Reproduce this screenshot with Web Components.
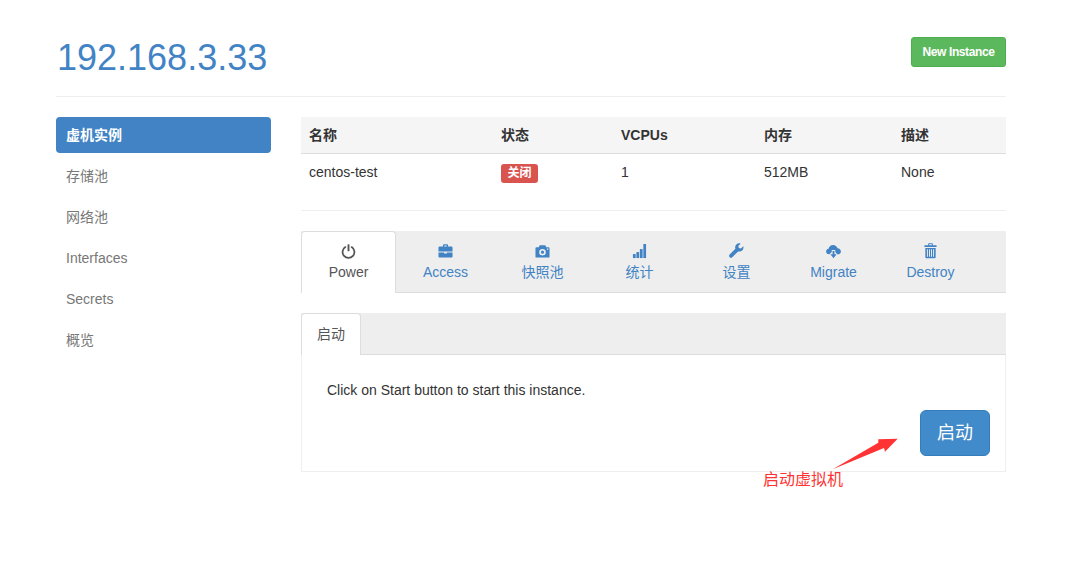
<!DOCTYPE html>
<html lang="zh">
<head>
<meta charset="utf-8">
<title>192.168.3.33</title>
<style>
    html, body { margin: 0; padding: 0; background: #fff; }
    body { font: 14px/20px "Liberation Sans", "Noto Sans CJK SC", sans-serif; color: #333; }
</style>
</head>
<body>
<instance-page>
    <page-header slot="header" title="192.168.3.33">New Instance</page-header>
    <side-nav slot="nav">
        <nav-pill active>虚机实例</nav-pill>
        <nav-pill>存储池</nav-pill>
        <nav-pill>网络池</nav-pill>
        <nav-pill>Interfaces</nav-pill>
        <nav-pill>Secrets</nav-pill>
        <nav-pill>概览</nav-pill>
    </side-nav>
    <instance-table></instance-table>
    <icon-tabs>
        <icon-tab icon="power" active>Power</icon-tab>
        <icon-tab icon="briefcase">Access</icon-tab>
        <icon-tab icon="camera">快照池</icon-tab>
        <icon-tab icon="signal">统计</icon-tab>
        <icon-tab icon="wrench">设置</icon-tab>
        <icon-tab icon="cloud">Migrate</icon-tab>
        <icon-tab icon="trash">Destroy</icon-tab>
    </icon-tabs>
    <start-panel tab="启动" button="启动" note="启动虚拟机">Click on Start button to start this instance.</start-panel>
</instance-page>

<script>
const ICONS = {
    power: '<path d="M4.600 3.300a6.300 6.300 0 1 0 6.800 0" fill="none" stroke="currentColor" stroke-width="1.900" stroke-linecap="round"/><rect x="7" y=".2" width="2" height="7.600" rx=".6" fill="currentColor"/>',
    briefcase: '<path fill-rule="evenodd" fill="currentColor" d="M5.300 2.700V1.200c0-.6.400-1 1-1h3.400c.6 0 1 .4 1 1v1.500h3.500c.7 0 1.300.5 1.300 1.200v4H.5v-4c0-.7.600-1.200 1.300-1.200zM6.700 2.700h2.600V1.500H6.700z"/><path fill="currentColor" d="M.5 9h6v1h3V9h6v4.200c0 .7-.6 1.300-1.300 1.300H1.800c-.7 0-1.300-.6-1.300-1.300z"/>',
    camera: '<path fill-rule="evenodd" fill="currentColor" d="M1.500 3.500h2.500l1-2.200h6l1 2.200h2.500c.6 0 1 .4 1 1v9c0 .6-.4 1-1 1h-13c-.6 0-1-.4-1-1v-9c0-.6.400-1 1-1zM8 5.200a3.500 3.500 0 1 0 0 7a3.500 3.500 0 0 0 0-7zM8 7a1.700 1.700 0 1 1 0 3.400a1.700 1.700 0 0 1 0-3.400zM12.700 4.700v1.300h1.500V4.700z"/>',
    signal: '<g fill="currentColor"><rect x="1" y="10.700" width="2.900" height="4.300"/><rect x="4.700" y="8.600" width="2.900" height="6.400"/><rect x="8.400" y="5.400" width="2.900" height="9.600"/><rect x="12.100" y="0" width="2.900" height="15"/></g>',
    wrench: '<path fill="currentColor" transform="translate(0,-.8)" d="M15.300 3.200l-2.600 2.500-2.200-.6-.6-2.200L12.400.4C10.800-.2 9 .2 7.800 1.400 6.600 2.600 6.300 4.300 6.800 5.800L.7 12c-.8.800-.8 2 0 2.800s2 .8 2.800 0l6.200-6.100c1.500.5 3.200.2 4.400-1 1.200-1.200 1.600-3 1.200-4.500z"/>',
    cloud: '<path fill="currentColor" d="M3.500 11H3.100C1.400 11 .1 9.700.1 8c0-1.500 1.100-2.700 2.600-3C3.200 2.700 5.200 1 7.600 1c2.200 0 4.100 1.400 4.700 3.400 2 .1 3.600 1.700 3.600 3.500 0 1.700-1.400 3.100-3.200 3.100h-.7L9.900 8.500V6.500H6.100v2z"/><path fill="currentColor" d="M7 7.500h2V11h2.300L8 15.300 4.700 11H7z"/>',
    trash: '<path transform="translate(0,-.8)" fill-rule="evenodd" fill="currentColor" d="M5.500 2V.9c0-.5.300-.9.800-.9h3.400c.5 0 .8.400.8.900V2h3.500c.3 0 .5.200.5.500V4H1.500V2.500c0-.3.200-.5.500-.5zM6.500 2h3V1h-3zM2.500 5h11v10c0 .6-.4 1-1 1h-9c-.6 0-1-.4-1-1zM4.200 6.500V14.500h1V6.500zM6.400 6.500V14.500h1V6.500zM8.600 6.500V14.500h1V6.500zM10.800 6.500V14.500h1V6.500z"/>'
};

class InstancePage extends HTMLElement {
    connectedCallback() {
        this.attachShadow({ mode: 'open' });
        this.shadowRoot.innerHTML = `
            <style>
                :host { display: block; width: 950px; min-height: 567px; padding: 0 76px 0 56px; }
                .body { display: grid; grid-template-columns: 215px 705px; column-gap: 30px; padding-top: 20px; }
            </style>
            <slot name="header"></slot>
            <div class="body">
                <slot name="nav"></slot>
                <div><slot></slot></div>
            </div>
        `;
    }
}

class PageHeader extends HTMLElement {
    connectedCallback() {
        this.attachShadow({ mode: 'open' });
        this.shadowRoot.innerHTML = `
            <style>
                :host { display: flex; justify-content: space-between; align-items: flex-start; height: 96px; border-bottom: 1px solid #eee; }
                h1 { margin: 38px 0 0 1px; font-size: 36px; line-height: 40px; font-weight: 400; color: #4183c4; }
                button {
                    margin-top: 37px; width: 95px; height: 30px; padding: 0; border: 1px solid #4cae4c; border-radius: 3px;
                    background: #5cb85c; color: #fff; font: 700 12px/18px "Liberation Sans", sans-serif; letter-spacing: -.4px;
                }
            </style>
            <h1>${this.getAttribute('title')}</h1>
            <button><slot></slot></button>
        `;
    }
}

class SideNav extends HTMLElement {
    connectedCallback() {
        this.attachShadow({ mode: 'open' });
        this.shadowRoot.innerHTML = `
            <style>:host { display: flex; flex-direction: column; gap: 5px; }</style>
            <slot></slot>
        `;
    }
}

class NavPill extends HTMLElement {
    connectedCallback() {
        this.attachShadow({ mode: 'open' });
        this.shadowRoot.innerHTML = `
            <style>
                :host { display: block; height: 36px; padding: 8px 10px; box-sizing: border-box; border-radius: 4px; color: #777; }
                :host([active]) { background: #4183c4; color: #fff; font-weight: 700; }
            </style>
            <slot></slot>
        `;
    }
}

class InstanceTable extends HTMLElement {
    connectedCallback() {
        this.attachShadow({ mode: 'open' });
        this.shadowRoot.innerHTML = `
            <style>
                :host { display: block; height: 93px; border-bottom: 1px solid #eee; }
                .row { display: grid; grid-template-columns: 192px 120px 143px 137px 113px; }
                .row > div { padding: 0 8px; }
                .head { height: 36px; line-height: 36px; background: #f5f5f5; border-bottom: 1px solid #ddd; font-weight: 700; }
                .cells { padding-top: 8px; line-height: 20px; }
                .label {
                    display: inline-block; width: 37px; height: 19px; margin-top: 2px; border-radius: 3px; background: #d9534f;
                    color: #fff; font-size: 12px; font-weight: 700; line-height: 18px; text-align: center; vertical-align: top;
                }
            </style>
            <div class="row head">
                <div>名称</div><div>状态</div><div>VCPUs</div><div>内存</div><div>描述</div>
            </div>
            <div class="row cells">
                <div>centos-test</div>
                <div><span class="label">关闭</span></div>
                <div>1</div><div>512MB</div><div>None</div>
            </div>
        `;
    }
}

class IconTabs extends HTMLElement {
    connectedCallback() {
        this.attachShadow({ mode: 'open' });
        this.shadowRoot.innerHTML = `
            <style>
                :host { display: flex; gap: 2px; height: 61px; margin-top: 20px; background: #eee; border-bottom: 1px solid #ddd; }
            </style>
            <slot></slot>
        `;
    }
}

class IconTab extends HTMLElement {
    connectedCallback() {
        this.attachShadow({ mode: 'open' });
        this.shadowRoot.innerHTML = `
            <style>
                :host {
                    display: flex; flex-direction: column; align-items: center; gap: 3px; width: 95px; height: 62px;
                    box-sizing: border-box; padding-top: 12px; border: 1px solid transparent; border-bottom: 0;
                    border-radius: 4px 4px 0 0; color: #4183c4;
                }
                :host([active]) { background: #fff; border-color: #ddd; color: #555; }
                svg { display: block; width: 15px; height: 15px; overflow: visible; }
            </style>
            <svg viewBox="0 0 16 16">${ICONS[this.getAttribute('icon')]}</svg>
            <slot></slot>
        `;
    }
}

class StartPanel extends HTMLElement {
    connectedCallback() {
        this.attachShadow({ mode: 'open' });
        this.shadowRoot.innerHTML = `
            <style>
                :host { display: block; position: relative; margin-top: 20px; }
                .bar { height: 41px; background: #eee; border-bottom: 1px solid #ddd; }
                .tab {
                    width: 60px; height: 42px; box-sizing: border-box; border: 1px solid #ddd; border-bottom: 0; border-radius: 4px 4px 0 0;
                    background: #fff; color: #555; line-height: 40px; text-align: center;
                }
                .pane { height: 117px; box-sizing: border-box; padding: 25px 15px 0 25px; border: 1px solid #eee; border-top: 0; }
                .pane p { margin: 0; }
                .actions { display: flex; justify-content: flex-end; margin-top: 10px; }
                button {
                    width: 70px; height: 46px; padding: 0; border: 1px solid #357ebd; border-radius: 6px;
                    background: #428bca; color: #fff; font: 18px/24px "Liberation Sans", "Noto Sans CJK SC", sans-serif;
                }
                svg { position: absolute; left: 525px; top: 121px; }
                .note { position: absolute; left: 462px; top: 157px; width: 90px; height: 20px; color: #f33; font-size: 16px; line-height: 20px; white-space: nowrap; }
            </style>
            <div class="bar"><div class="tab">${this.getAttribute('tab')}</div></div>
            <div class="pane">
                <p><slot></slot></p>
                <div class="actions"><button>${this.getAttribute('button')}</button></div>
            </div>
            <svg width="74" height="36" viewBox="0 0 74 36"><path fill="#f33" d="M6.700 35.300L52.300 8.700V5.300L71.700 4.700 59 17.700 58 14z"/></svg>
            <div class="note">${this.getAttribute('note')}</div>
        `;
    }
}

customElements.define('instance-page', InstancePage);
customElements.define('page-header', PageHeader);
customElements.define('side-nav', SideNav);
customElements.define('nav-pill', NavPill);
customElements.define('instance-table', InstanceTable);
customElements.define('icon-tabs', IconTabs);
customElements.define('icon-tab', IconTab);
customElements.define('start-panel', StartPanel);
</script>
</body>
</html>
